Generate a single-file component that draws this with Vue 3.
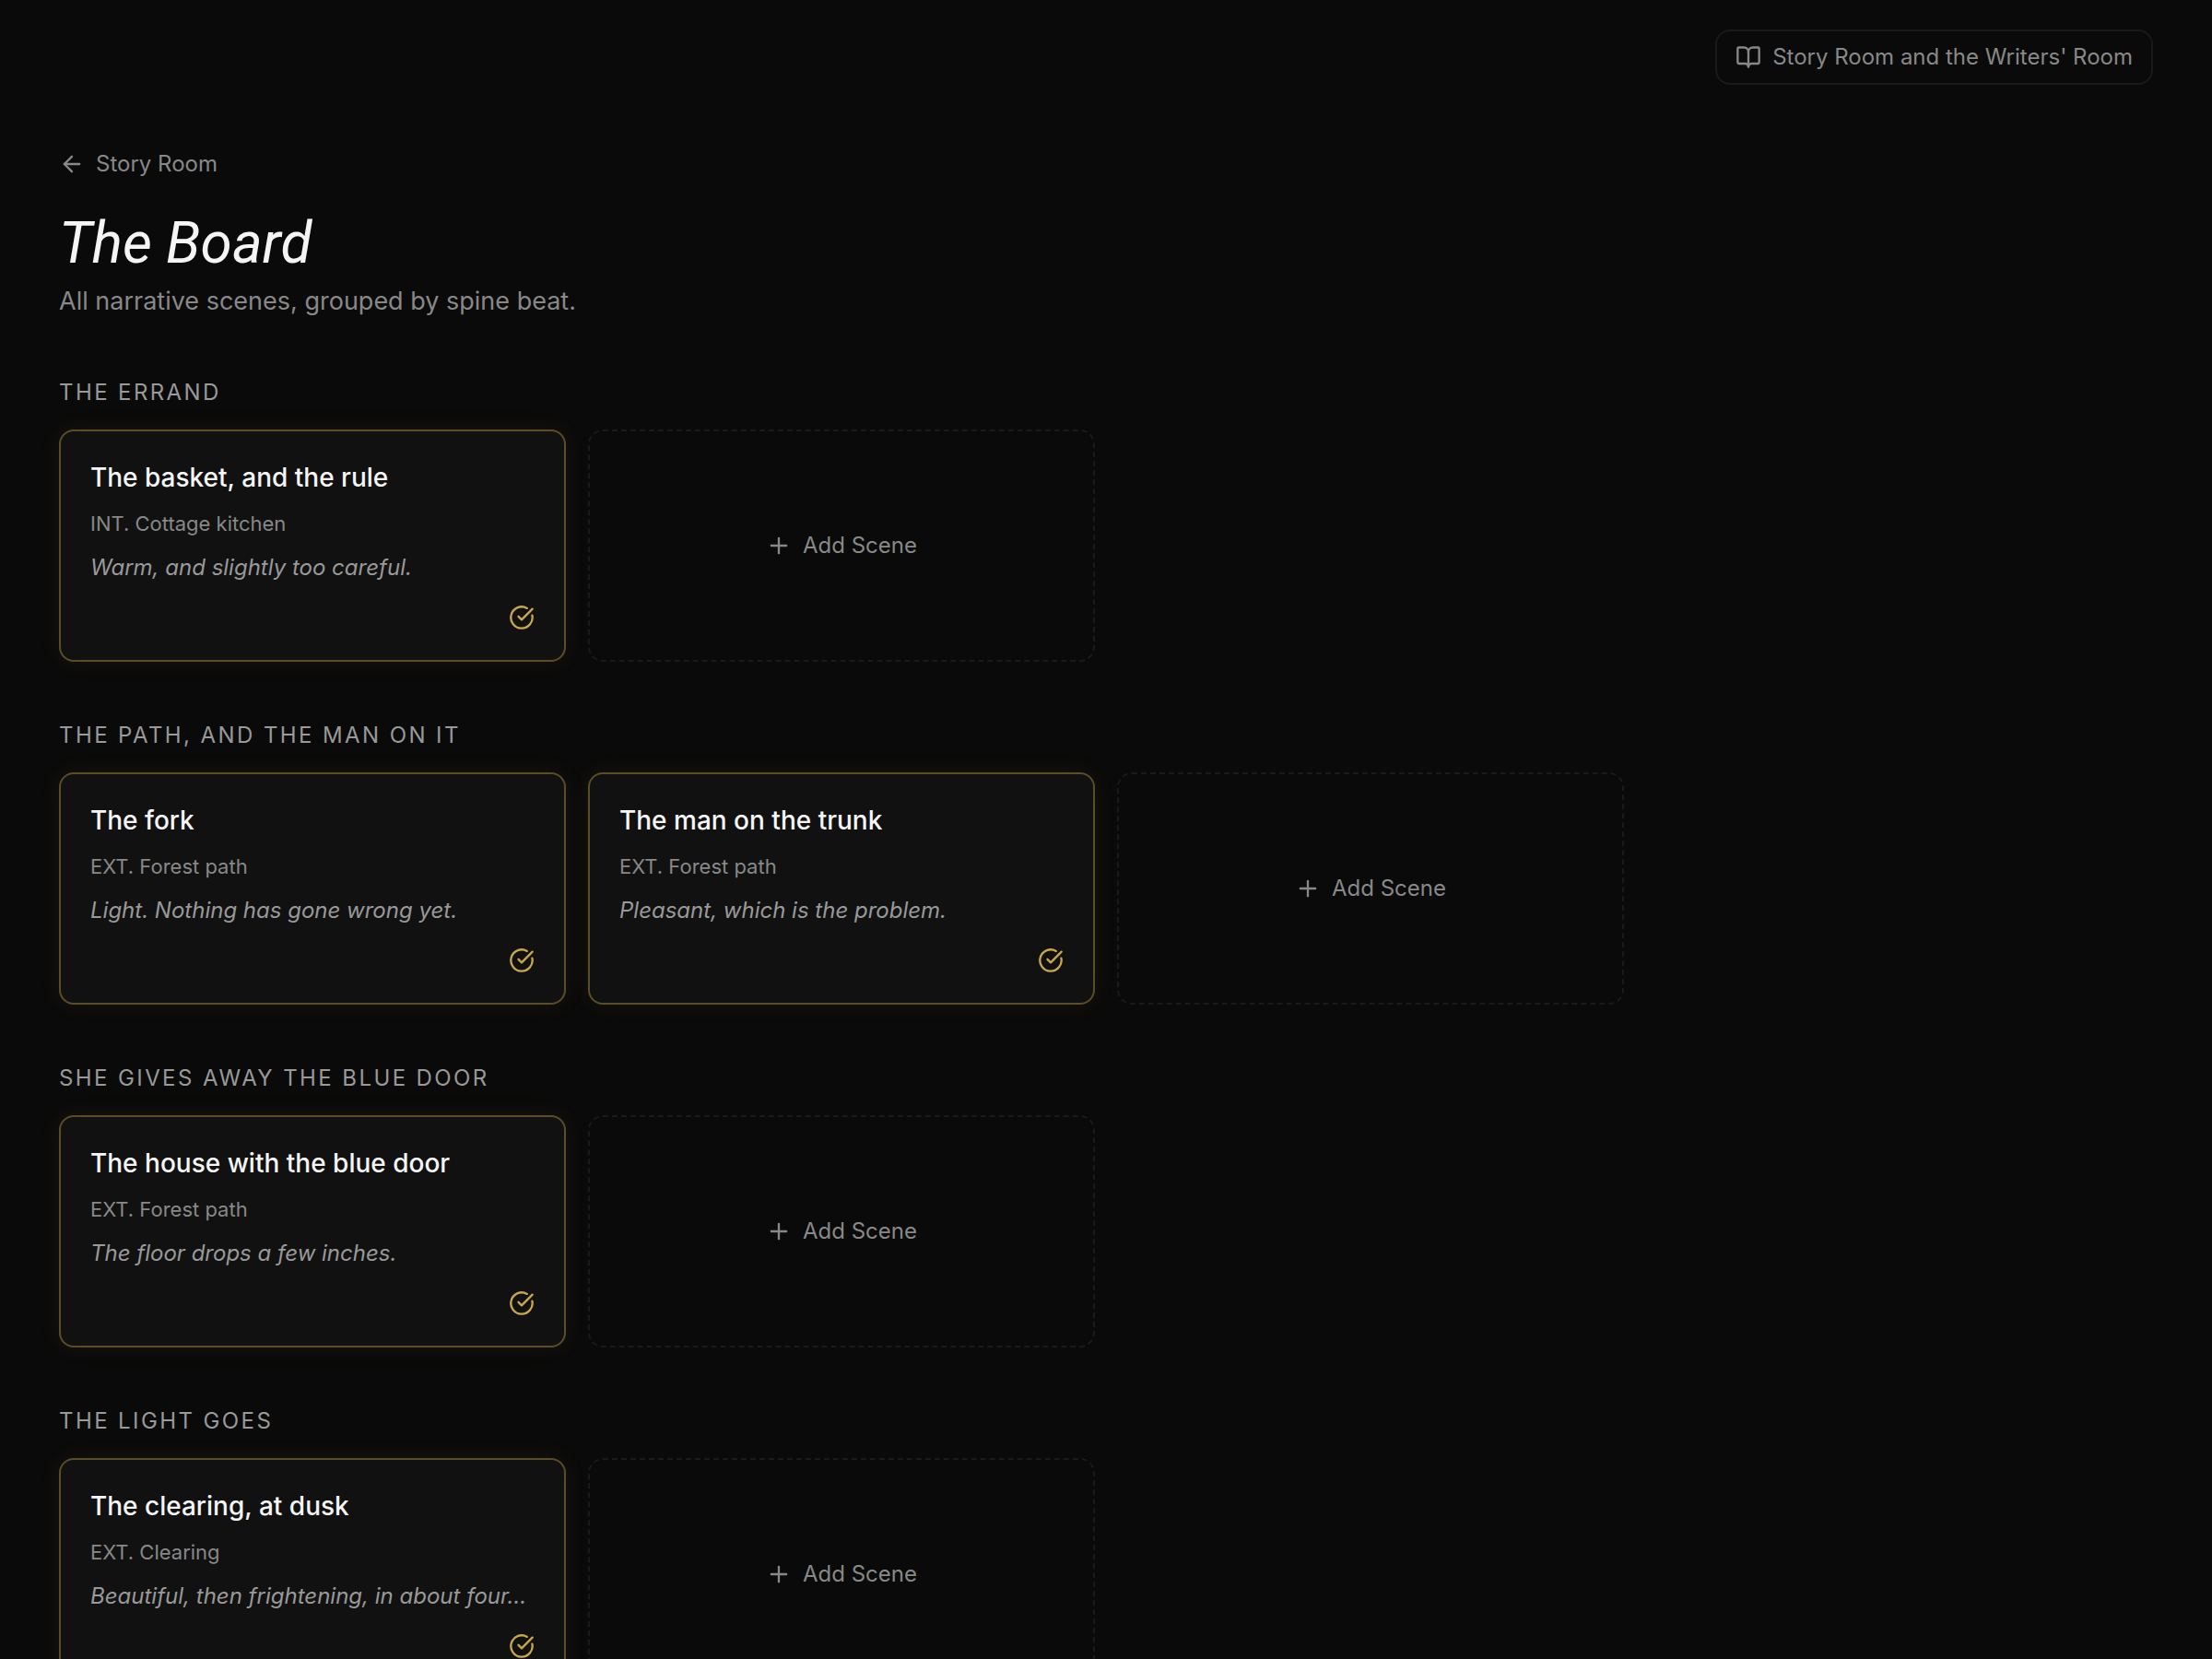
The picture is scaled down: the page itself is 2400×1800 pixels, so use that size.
<template>
  <div class="page">
    <header class="topbar">
      <button class="room-button" type="button">
        <svg class="icon" viewBox="0 0 24 24" aria-hidden="true">
          <path d="M12 7v14" />
          <path d="M3 18a1 1 0 0 1-1-1V4a1 1 0 0 1 1-1h5a4 4 0 0 1 4 4 4 4 0 0 1 4-4h5a1 1 0 0 1 1 1v13a1 1 0 0 1-1 1h-6a3 3 0 0 0-3 3 3 3 0 0 0-3-3z" />
        </svg>
        Story Room and the Writers' Room
      </button>
    </header>

    <main class="board">
      <a class="back-link" href="#">
        <svg class="icon" viewBox="0 0 24 24" aria-hidden="true">
          <path d="m12 19-7-7 7-7" />
          <path d="M19 12H5" />
        </svg>
        Story Room
      </a>
      <h1 class="board__title">The Board</h1>
      <p class="board__subtitle">All narrative scenes, grouped by spine beat.</p>

      <section v-for="beat in beats" :key="beat.name" class="beat">
        <h2 class="beat__name">{{ beat.name }}</h2>
        <div class="beat__grid">
          <article v-for="scene in beat.scenes" :key="scene.title" class="scene">
            <h3 class="scene__title">{{ scene.title }}</h3>
            <p class="scene__location">{{ scene.location }}</p>
            <p class="scene__tone">{{ scene.tone }}</p>
            <svg class="icon scene__check" viewBox="0 0 24 24" role="img" aria-label="Done">
              <path d="M21.801 10A10 10 0 1 1 17 3.335" />
              <path d="m9 11 3 3L22 4" />
            </svg>
          </article>
          <button class="add-scene" type="button" @click="addScene(beat)">
            <svg class="icon" viewBox="0 0 24 24" aria-hidden="true">
              <path d="M5 12h14" />
              <path d="M12 5v14" />
            </svg>
            Add Scene
          </button>
        </div>
      </section>
    </main>
  </div>
</template>

<script setup>
import { reactive } from 'vue';

const beats = reactive([
  {
    name: 'The Errand',
    scenes: [
      { title: 'The basket, and the rule', location: 'INT. Cottage kitchen', tone: 'Warm, and slightly too careful.' },
    ],
  },
  {
    name: 'The Path, and the Man on It',
    scenes: [
      { title: 'The fork', location: 'EXT. Forest path', tone: 'Light. Nothing has gone wrong yet.' },
      { title: 'The man on the trunk', location: 'EXT. Forest path', tone: 'Pleasant, which is the problem.' },
    ],
  },
  {
    name: 'She Gives Away the Blue Door',
    scenes: [
      { title: 'The house with the blue door', location: 'EXT. Forest path', tone: 'The floor drops a few inches.' },
    ],
  },
  {
    name: 'The Light Goes',
    scenes: [
      { title: 'The clearing, at dusk', location: 'EXT. Clearing', tone: 'Beautiful, then frightening, in about four…' },
    ],
  },
]);

function addScene(beat) {
  beat.scenes.push({ title: 'Untitled scene', location: 'INT.', tone: '' });
}
</script>

<style>
html {
  background: #0a0a0a;
}

body {
  margin: 0;
}
</style>

<style scoped>
.page {
  height: 100vh;
  overflow-y: auto;
  scrollbar-width: none;
  background: #0a0a0a;
  color: #888;
  font-family: Inter, "Liberation Sans", sans-serif;
  font-size: 24px;
  line-height: 32px;
}

h1,
h2,
h3,
p {
  margin: 0;
  font-size: inherit;
  font-weight: 400;
}

button {
  font: inherit;
  color: inherit;
  background: transparent;
  cursor: pointer;
}

.icon {
  width: 28px;
  height: 28px;
  flex: none;
  fill: none;
  stroke: currentColor;
  stroke-width: 2;
  stroke-linecap: round;
  stroke-linejoin: round;
}

.topbar {
  display: flex;
  justify-content: flex-end;
  padding: 32px 64px 0;
}

.room-button {
  display: flex;
  align-items: center;
  gap: 12px;
  padding: 12px 20px;
  border: 2px solid #1a1a1a;
  border-radius: 16px;
}

.board {
  padding: 70px 64px 64px;
}

.back-link {
  display: inline-flex;
  align-items: center;
  gap: 12px;
  color: inherit;
  text-decoration: none;
}

.board__title {
  margin-top: 28px;
  color: #f5f5f5;
  font-family: Roboto, Inter, sans-serif;
  font-size: 62px;
  line-height: 72px;
  font-style: italic;
}

.board__subtitle {
  margin-top: 8px;
  font-size: 27px;
  line-height: 38px;
}

.beat {
  margin-top: 64px;
}

.beat__name {
  margin-bottom: 24px;
  color: #999;
  letter-spacing: 0.1em;
  text-transform: uppercase;
}

.beat__grid {
  display: grid;
  grid-template-columns: repeat(4, minmax(0, 1fr));
  gap: 24px;
}

.scene,
.add-scene {
  box-sizing: border-box;
  min-height: 252px;
  border-radius: 16px;
}

.scene {
  display: flex;
  flex-direction: column;
  padding: 32px;
  border: 2px solid #5c4d25;
  background: #111;
  box-shadow: 0 0 24px rgba(201, 168, 76, 0.08);
}

.scene__title {
  color: #f5f5f5;
  font-size: 28px;
  line-height: 36px;
  font-weight: 500;
}

.scene__location {
  margin-top: 16px;
  font-size: 22px;
}

.scene__tone {
  margin-top: 16px;
  overflow: hidden;
  color: #999;
  font-style: italic;
  text-overflow: ellipsis;
  white-space: nowrap;
}

.scene__check {
  margin-top: auto;
  align-self: flex-end;
  color: #c9a84c;
}

.add-scene {
  display: flex;
  align-items: center;
  justify-content: center;
  gap: 12px;
  border: 2px dashed #1a1a1a;
}
</style>
